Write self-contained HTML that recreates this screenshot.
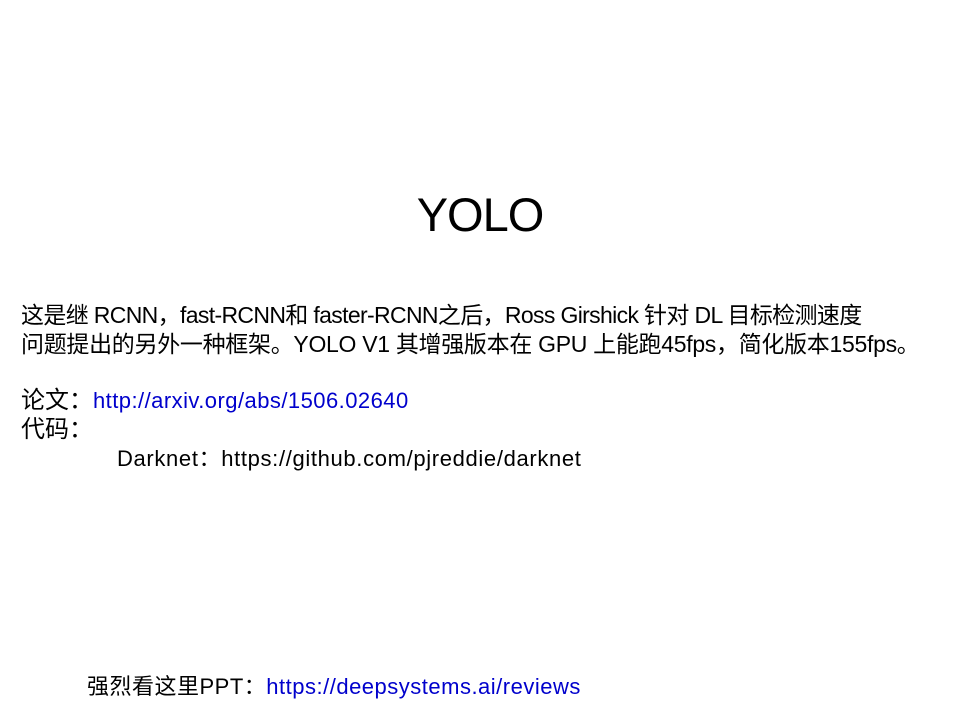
<!DOCTYPE html>
<html><head><meta charset="utf-8"><style>
body{margin:0;width:960px;height:720px;background:#fff;position:relative;overflow:hidden;font-family:"Liberation Sans","Noto Sans CJK SC",sans-serif;color:#000}
.t{position:absolute;white-space:nowrap;font-size:23px;line-height:30px}
</style></head><body>
<div class="t" style="left:0;width:960px;text-align:center;top:185px;font-size:47px;line-height:60px;letter-spacing:-1px">YOLO</div>
<div class="t" style="left:21px;top:300px;letter-spacing:-0.65px">这是继 RCNN，fast-RCNN和 faster-RCNN之后，Ross Girshick 针对 DL 目标检测速度</div>
<div class="t" style="left:21px;top:329px;letter-spacing:-0.3px">问题提出的另外一种框架。YOLO V1 其增强版本在 GPU 上能跑45fps，简化版本155fps。</div>
<div class="t" style="left:21px;top:386px;font-size:24px">论文：<span style="color:#0000cc;font-size:22px;letter-spacing:0.45px">http://arxiv.org/abs/1506.02640</span></div>
<div class="t" style="left:21px;top:415px;font-size:24px">代码：</div>
<div class="t" style="left:117px;top:444px;font-size:22px;letter-spacing:0.65px">Darknet：https://github.com/pjreddie/darknet</div>
<div class="t" style="left:87px;top:672px;font-size:22px;letter-spacing:0.5px">强烈看这里PPT：<span style="color:#0000cc">https://deepsystems.ai/reviews</span></div>
</body></html>
